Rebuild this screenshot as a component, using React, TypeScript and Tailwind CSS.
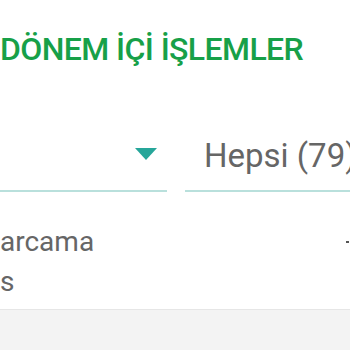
import React from "react";

export default function App() {
  return (
    <div className="w-[350px] h-[350px] overflow-hidden bg-white relative" style={{ fontFamily: "Roboto, 'Noto Sans', sans-serif" }}>
      <div className="pt-[29px] h-[120px]">
        <div className="text-[32px] leading-[40px] font-medium text-[#17a048] whitespace-nowrap tracking-[-0.6px]">DÖNEM İÇİ İŞLEMLER</div>
      </div>
      <div className="flex h-[72px]">
        <div className="w-[167px] shrink-0 flex flex-col justify-end">
          <div className="flex-1 flex items-center justify-end pr-[10px] pb-[2px]">
            <svg width="22" height="12" viewBox="0 0 22 12"><polygon points="0,0 22,0 11,12" fill="#26a69a" /></svg>
          </div>
          <div className="h-[2px] bg-[#b9e0dc]" />
        </div>
        <div className="ml-[18px] flex-1 min-w-0 flex flex-col justify-end">
          <div className="flex-1 min-w-0 flex items-center pl-[19px] pt-[1px] text-[33px] text-[#666666] whitespace-nowrap overflow-hidden">Hepsi (79)</div>
          <div className="h-[2px] bg-[#b9e0dc]" />
        </div>
      </div>
      <div className="flex h-[118px] border-b border-[#e6e6e6]">
        <div className="flex-1 pt-[30px] text-[28px] leading-[40px] text-[#666666]">
          <div>arcama</div>
          <div>s</div>
        </div>
        <div className="w-[4px] pt-[49px]">
          <div className="w-[3px] h-[2px] bg-[#555555]" />
        </div>
      </div>
      <div className="flex-1 h-[40px] bg-[#f3f3f3]" />
    </div>
  );
}
